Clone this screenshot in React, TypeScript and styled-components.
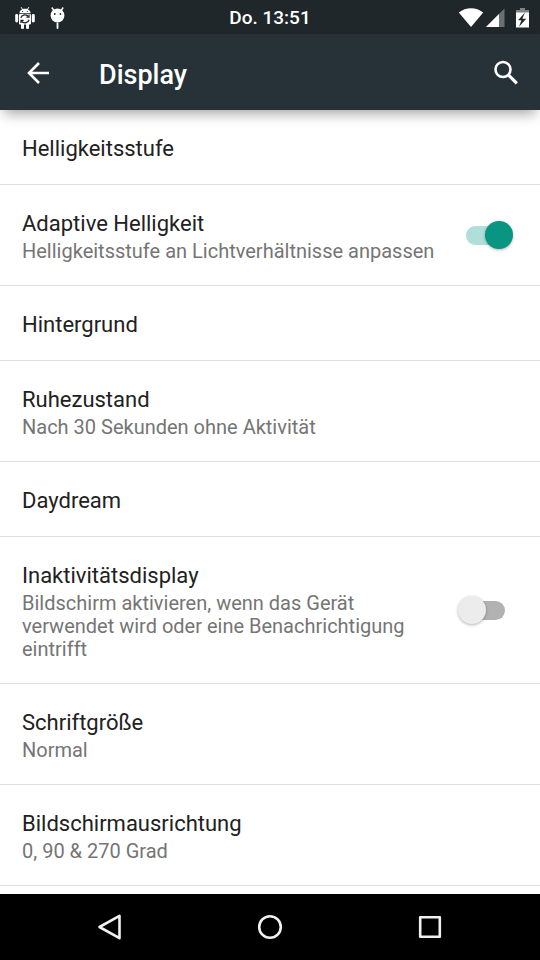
import React, { useState } from "react";
import styled, { createGlobalStyle } from "styled-components";

const GlobalStyle = createGlobalStyle`
  *, *::before, *::after { box-sizing: border-box; }
  body {
    margin: 0;
    background: #fff;
    font-family: Roboto, "Noto Sans", sans-serif;
  }
  svg { display: block; }
`;

const Screen = styled.div`
  display: flex;
  flex-direction: column;
  height: 100vh;
  overflow: hidden;
`;

const StatusBar = styled.header`
  display: grid;
  grid-template-columns: 1fr auto 1fr;
  align-items: center;
  flex: none;
  height: 34px;
  padding: 2px 11px 0;
  background: #1f272a;
  color: #fff;
`;

const StatusIcons = styled.div<{ $end?: boolean }>`
  display: flex;
  align-items: center;
  justify-content: ${(p) => (p.$end ? "flex-end" : "flex-start")};
`;

const Clock = styled.time`
  font-size: 19px;
  line-height: 24px;
  font-weight: 500;
`;

const AppBar = styled.div`
  position: relative;
  z-index: 1;
  display: flex;
  align-items: center;
  flex: none;
  height: 76px;
  padding: 2px 16px 0 20px;
  background: #263238;
  color: #fff;
  box-shadow: 0 8px 12px -4px rgba(0, 0, 0, 0.34);
`;

const PageTitle = styled.h1`
  flex: 1;
  margin: 0;
  padding: 3px 0 0 43px;
  font-size: 27px;
  line-height: 32px;
  font-weight: 500;
`;

const IconButton = styled.button`
  display: flex;
  align-items: center;
  justify-content: center;
  flex: none;
  min-width: 36px;
  height: 40px;
  padding: 0;
  border: 0;
  background: none;
  color: inherit;
  cursor: pointer;
`;

const Settings = styled.main`
  flex: 1;
  min-height: 0;
  overflow-y: auto;
  scrollbar-width: none;
  background: #fff;
`;

const SettingList = styled.ul`
  margin: 0;
  padding: 0;
  list-style: none;
`;

const SettingItem = styled.li`
  border-bottom: 1px solid #dedede;
`;

const SettingButton = styled.button`
  display: block;
  width: 100%;
  padding: 22px;
  border: 0;
  background: none;
  font: inherit;
  text-align: left;
  cursor: pointer;
`;

const SettingLabel = styled.label`
  display: flex;
  align-items: center;
  gap: 20px;
  padding: 22px 27px 22px 22px;
  cursor: pointer;
`;

const SettingText = styled.span`
  display: block;
  flex: 1;
  padding-top: 4px;
`;

const SettingTitle = styled.span`
  display: block;
  font-size: 22px;
  line-height: 26px;
  color: #212121;
`;

const SettingSummary = styled.span`
  display: block;
  padding-top: 3px;
  font-size: 20px;
  line-height: 23px;
  color: #757575;
`;

const Switch = styled.input`
  appearance: none;
  display: grid;
  align-items: center;
  flex: none;
  width: 55px;
  height: 28px;
  margin: 0;
  cursor: pointer;

  &::before,
  &::after {
    content: "";
    grid-area: 1 / 1;
  }
  &::before {
    height: 19px;
    margin: 0 8px;
    border-radius: 10px;
    background: #b2b2b2;
  }
  &::after {
    width: 28px;
    height: 28px;
    border-radius: 50%;
    background: #ececec;
    box-shadow: 0 1px 3px rgba(0, 0, 0, 0.3);
  }
  &:checked::before { background: #b0dfd9; }
  &:checked::after {
    justify-self: end;
    background: #089581;
  }
`;

const NavBar = styled.nav`
  display: flex;
  align-items: center;
  justify-content: center;
  flex: none;
  height: 66px;
  background: #000;
  color: #f0f0f0;
`;

const NavButton = styled(IconButton)`
  flex: 0 1 160px;
  height: 66px;
`;

const SyncRobotIcon = () => (
  <svg width="25" height="24" viewBox="-3 0 25 24" fill="#fff" aria-hidden="true">
    <path d="M5.500 7.200C5.500 4.600 7.700 2.700 11 2.700s5.500 1.900 5.500 4.500z" />
    <path d="M7.200 1.200l1.500 2.500M14.800 1.200l-1.500 2.500" stroke="#fff" strokeWidth="1" />
    <rect x="5" y="8" width="12" height="10.500" rx="1" />
    <rect x="1.200" y="8" width="3" height="8.500" rx="1.400" />
    <rect x="17.800" y="8" width="3" height="8.500" rx="1.400" />
    <rect x="7" y="17" width="3" height="6" rx="1.300" />
    <rect x="12" y="17" width="3" height="6" rx="1.300" />
    <g fill="none" stroke="#1f272a" strokeWidth="1.300">
      <path d="M6.900 11.800a4.300 4.300 0 0 1 7.600-1.200M15.100 13.800a4.300 4.300 0 0 1-7.600 1.200" />
      <path d="M15 8.500v2.700h-2.600M7 17v-2.700h2.600" />
    </g>
    <circle cx="8.700" cy="5.500" r="0.600" fill="#1f272a" />
    <circle cx="13.300" cy="5.500" r="0.600" fill="#1f272a" />
  </svg>
);

const RobotHeadIcon = () => (
  <svg width="44" height="24" viewBox="0 0 44 24" fill="#fff" aria-hidden="true">
    <circle cx="21.500" cy="9.500" r="6.900" />
    <path d="M15.800 1.500l2.400 3.500M27.200 1.500L24.800 5" stroke="#fff" strokeWidth="1.400" />
    <path d="M21.500 17.500v4.500" stroke="#fff" strokeWidth="1.800" strokeLinecap="round" />
    <circle cx="18.800" cy="8" r="0.900" fill="#1f272a" />
    <circle cx="24.400" cy="8" r="0.900" fill="#1f272a" />
  </svg>
);

const WifiIcon = () => (
  <svg width="28" height="20" viewBox="0 0 28 20" aria-hidden="true">
    <path d="M13 19L.800 4.500C4.400 1.800 8.500 .300 13 .300s8.600 1.500 12.200 4.200z" fill="#fff" />
  </svg>
);

const SignalIcon = () => (
  <svg width="19" height="20" viewBox="0 0 19 20" aria-hidden="true">
    <path d="M0 19L18.500 .500V19z" fill="#687074" />
    <path d="M0 19L13 6v13z" fill="#fff" />
  </svg>
);

const BatteryIcon = () => (
  <svg width="24" height="22" viewBox="0 0 24 22" aria-hidden="true">
    <path d="M15 1h5v2h-5zM11 3h13v4H11z" fill="#7d8588" />
    <path d="M11 5.500h13v15H11z" fill="#fff" />
    <path d="M20 5.500l-7 7.800h3.400l-2.400 6.500 7.200-8h-3.900z" fill="#1f272a" />
  </svg>
);

const BackArrowIcon = () => (
  <svg width="24" height="24" viewBox="0 0 24 24" fill="none" stroke="#fff" strokeWidth="2.600" aria-hidden="true">
    <path d="M23 12H3M13 2L3 12l10 10" />
  </svg>
);

const SearchIcon = () => (
  <svg width="26" height="26" viewBox="0 0 26 26" fill="none" stroke="#fff" aria-hidden="true">
    <circle cx="10" cy="9.500" r="7.500" strokeWidth="2.600" />
    <path d="M15.800 15.300l8 8" strokeWidth="3.200" />
  </svg>
);

const NavBackIcon = () => (
  <svg width="28" height="28" viewBox="0 0 28 28" fill="none" stroke="currentColor" strokeWidth="2.600" strokeLinejoin="round" aria-hidden="true">
    <path d="M23.500 2.800v22.400L3.500 14z" />
  </svg>
);

const NavHomeIcon = () => (
  <svg width="28" height="28" viewBox="0 0 28 28" fill="none" stroke="currentColor" strokeWidth="2.600" aria-hidden="true">
    <circle cx="14" cy="14" r="10.800" />
  </svg>
);

const NavRecentsIcon = () => (
  <svg width="28" height="28" viewBox="0 0 28 28" fill="none" stroke="currentColor" strokeWidth="2.600" strokeLinejoin="round" aria-hidden="true">
    <rect x="4.200" y="4.200" width="19.600" height="19.600" />
  </svg>
);

interface Setting {
  title: string;
  summary?: string;
  enabled?: boolean;
}

const settings: Setting[] = [
  { title: "Helligkeitsstufe" },
  {
    title: "Adaptive Helligkeit",
    summary: "Helligkeitsstufe an Lichtverhältnisse anpassen",
    enabled: true,
  },
  { title: "Hintergrund" },
  { title: "Ruhezustand", summary: "Nach 30 Sekunden ohne Aktivität" },
  { title: "Daydream" },
  {
    title: "Inaktivitätsdisplay",
    summary:
      "Bildschirm aktivieren, wenn das Gerät verwendet wird oder eine Benachrichtigung eintrifft",
    enabled: false,
  },
  { title: "Schriftgröße", summary: "Normal" },
  { title: "Bildschirmausrichtung", summary: "0, 90 & 270 Grad" },
];

const SettingRow = ({ title, summary, enabled }: Setting) => {
  const [on, setOn] = useState(Boolean(enabled));
  const text = (
    <SettingText>
      <SettingTitle>{title}</SettingTitle>
      {summary && <SettingSummary>{summary}</SettingSummary>}
    </SettingText>
  );

  return (
    <SettingItem>
      {enabled === undefined ? (
        <SettingButton type="button">{text}</SettingButton>
      ) : (
        <SettingLabel>
          {text}
          <Switch
            type="checkbox"
            role="switch"
            checked={on}
            onChange={(e) => setOn(e.target.checked)}
          />
        </SettingLabel>
      )}
    </SettingItem>
  );
};

export default function App() {
  return (
    <Screen>
      <GlobalStyle />
      <StatusBar>
        <StatusIcons>
          <SyncRobotIcon />
          <RobotHeadIcon />
        </StatusIcons>
        <Clock>Do. 13:51</Clock>
        <StatusIcons $end>
          <WifiIcon />
          <SignalIcon />
          <BatteryIcon />
        </StatusIcons>
      </StatusBar>
      <AppBar>
        <IconButton type="button" aria-label="Zurück">
          <BackArrowIcon />
        </IconButton>
        <PageTitle>Display</PageTitle>
        <IconButton type="button" aria-label="Suchen">
          <SearchIcon />
        </IconButton>
      </AppBar>
      <Settings>
        <SettingList>
          {settings.map((s) => (
            <SettingRow key={s.title} {...s} />
          ))}
        </SettingList>
      </Settings>
      <NavBar>
        <NavButton type="button" aria-label="Zurück">
          <NavBackIcon />
        </NavButton>
        <NavButton type="button" aria-label="Startbildschirm">
          <NavHomeIcon />
        </NavButton>
        <NavButton type="button" aria-label="Letzte Apps">
          <NavRecentsIcon />
        </NavButton>
      </NavBar>
    </Screen>
  );
}
